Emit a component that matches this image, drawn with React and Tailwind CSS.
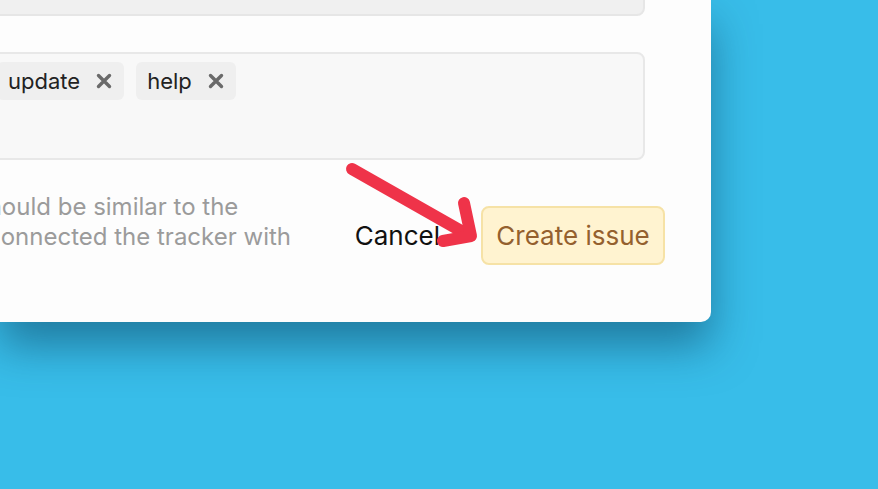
import React from 'react';

function Tag({ label }) {
  return (
    <span className="flex items-center gap-[16px] h-[38px] pl-[11px] pr-[12px] bg-[#efefef] rounded-md text-[22px] text-[#222]">
      {label}
      <svg className="w-[16px] h-[16px]" viewBox="0 0 16 16" fill="none" stroke="#6a6a6a" strokeWidth={3.4} strokeLinecap="round">
        <path d="M2.5 2.5l11 11M13.5 2.5l-11 11" />
      </svg>
    </span>
  );
}

export default function App() {
  return (
    <div className="w-[878px] h-[489px] overflow-hidden bg-[#38bde9]" style={{ fontFamily: 'Inter, "Noto Sans", sans-serif' }}>
      <div className="relative w-[711px] h-[322px] bg-[#fdfdfd] rounded-br-[10px] shadow-[0_24px_44px_rgba(10,60,90,0.5)] overflow-hidden">
        <div className="flex flex-col pr-[46px]">
          <div className="-ml-[20px] mr-[20px] -mt-[26px] h-[42px] bg-[#f0f0f0] border-2 border-[#e6e6e6] rounded-lg" />

          <div className="-ml-[14px] mr-[20px] mt-[36px] h-[108px] bg-[#f8f8f8] border-2 border-[#e8e8e8] rounded-lg pt-[8px] pl-[9px]">
            <div className="flex gap-[12px]">
              <Tag label="update" />
              <Tag label="help" />
            </div>
          </div>

          <div className="flex items-start justify-between mt-[32px]">
            <p className="text-[24px] leading-[30px] text-[#9b9b9b] whitespace-nowrap">
              <span className="block -ml-[25px]">should be similar to the</span>
              <span className="block -ml-[13px]">connected the tracker with</span>
            </p>
            <div className="flex items-center gap-[41px] mt-[14px]">
              <button className="text-[26px] text-[#111]">Cancel</button>
              <button className="w-[184px] h-[59px] bg-[#fff3d0] border-2 border-[#f6e2a6] rounded-lg text-[26px] text-[#94602e]">
                Create issue
              </button>
            </div>
          </div>
        </div>

        <svg className="absolute left-0 top-0 pointer-events-none" width="711" height="322" viewBox="0 0 711 322" fill="none">
          <g stroke="#ef3349" strokeWidth={12} strokeLinecap="round" strokeLinejoin="round">
            <path d="M352 169L470 236" />
            <path d="M464 203L471 236L443 241" />
          </g>
        </svg>
      </div>
    </div>
  );
}
